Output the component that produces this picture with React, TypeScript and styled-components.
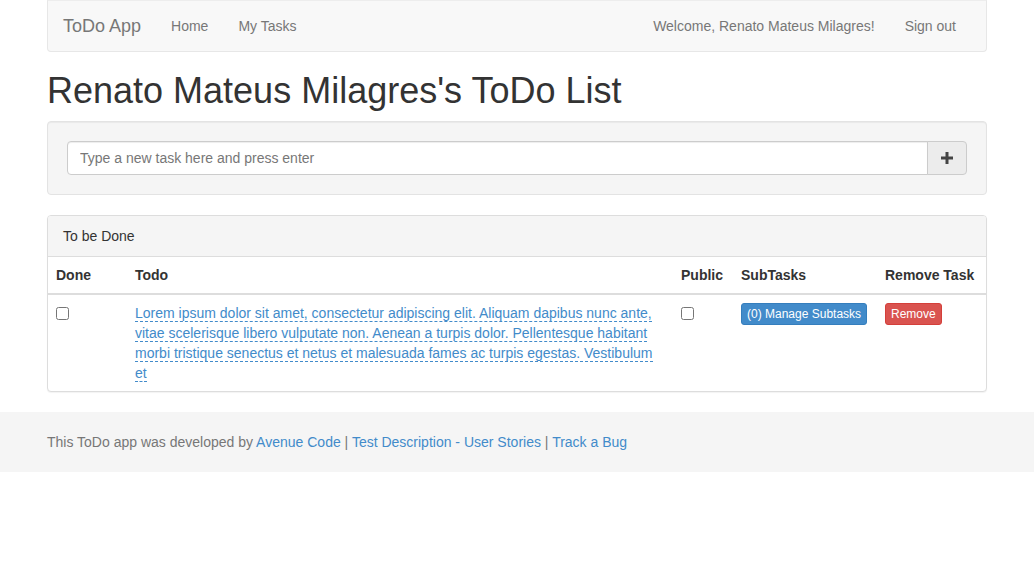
import React from "react";
import styled, { createGlobalStyle } from "styled-components";

const Global = createGlobalStyle`
  * { box-sizing: border-box; }
  html, body { margin: 0; padding: 0; }
  body {
    font-family: "Liberation Sans", Arial, Helvetica, sans-serif;
    font-size: 14px;
    line-height: 1.42857143;
    color: #333;
    background: #fff;
  }
`;

const Container = styled.div`
  width: 970px;
  margin: 0 auto;
  padding: 0 15px;
`;

const Navbar = styled.nav`
  display: flex;
  align-items: center;
  justify-content: space-between;
  height: 52px;
  padding: 0 15px;
  background: #f8f8f8;
  border: 1px solid #e7e7e7;
  border-top-color: #ededed;
  border-radius: 0 0 4px 4px;
  margin-bottom: 19px;
`;

const NavGroup = styled.div`
  display: flex;
  align-items: center;
`;

const Brand = styled.a`
  font-size: 18px;
  line-height: 20px;
  color: #777;
  padding: 15px 15px 15px 0;
  text-decoration: none;
`;

const NavLink = styled.a`
  font-size: 14px;
  line-height: 20px;
  color: #777;
  padding: 15px;
  text-decoration: none;
`;

const NavText = styled.span`
  color: #777;
  margin: 0 15px;
  line-height: 20px;
`;

const Title = styled.h1`
  font-family: "Liberation Sans", Arial, sans-serif;
  font-weight: 500;
  font-size: 36px;
  line-height: 1.1;
  margin: 19px 0 10px;
  color: #333;
`;

const Well = styled.div`
  background: #f5f5f5;
  border: 1px solid #e3e3e3;
  border-radius: 4px;
  padding: 19px;
  margin-bottom: 20px;
  box-shadow: inset 0 1px 1px rgba(0, 0, 0, 0.05);
`;

const InputGroup = styled.div`
  display: flex;
  height: 34px;
`;

const TaskInput = styled.input`
  flex: 1;
  height: 34px;
  padding: 6px 12px;
  font-family: "Liberation Sans", Arial, sans-serif;
  font-size: 14px;
  color: #555;
  background: #fff;
  border: 1px solid #ccc;
  border-radius: 4px 0 0 4px;
  box-shadow: inset 0 1px 1px rgba(0, 0, 0, 0.075);
  outline: none;
  &::placeholder { color: #777; opacity: 1; }
`;

const AddButton = styled.button`
  width: 40px;
  height: 34px;
  margin-left: -1px;
  display: flex;
  align-items: center;
  justify-content: center;
  background: #ececec;
  border: 1px solid #ccc;
  border-radius: 0 4px 4px 0;
  padding: 0;
`;

const Panel = styled.div`
  border: 1px solid #ddd;
  border-radius: 4px;
  background: #fff;
  margin-bottom: 20px;
  box-shadow: 0 1px 1px rgba(0, 0, 0, 0.05);
  overflow: hidden;
`;

const PanelHeading = styled.div`
  background: #f5f5f5;
  border-bottom: 1px solid #ddd;
  padding: 10px 15px;
  line-height: 20px;
  color: #333;
`;

const Table = styled.table`
  width: 100%;
  border-collapse: collapse;
  table-layout: fixed;
`;

const Th = styled.th<{ $w: number }>`
  width: ${(p) => p.$w}px;
  text-align: left;
  font-weight: bold;
  padding: 8px;
  line-height: 20px;
  border-bottom: 2px solid #ddd;
  vertical-align: bottom;
`;

const Td = styled.td`
  padding: 8px;
  line-height: 20px;
  vertical-align: top;
`;

const Check = styled.input`
  margin: 4px 0 0;
  width: 13px;
  height: 13px;
  display: block;
`;

const EditableLink = styled.a`
  color: #428bca;
  text-decoration: none;
  border-bottom: 1px dashed #428bca;
`;

const XsButton = styled.button<{ $variant: "primary" | "danger" }>`
  font-family: "Liberation Sans", Arial, sans-serif;
  font-size: 12px;
  line-height: 1.5;
  padding: 1px 5px;
  border-radius: 3px;
  color: #fff;
  background: ${(p) => (p.$variant === "primary" ? "#428bca" : "#d9534f")};
  border: 1px solid ${(p) => (p.$variant === "primary" ? "#357ebd" : "#d43f3a")};
`;

const Footer = styled.footer`
  background: #f5f5f5;
  padding: 20px 0;
  line-height: 20px;
  color: #777;
`;

const FootLink = styled.a`
  color: #428bca;
  text-decoration: none;
`;

const PlusIcon = () => (
  <svg width="14" height="14" viewBox="0 0 14 14">
    <path d="M5.5 1h3v4.5H13v3H8.5V13h-3V8.5H1v-3h4.5z" fill="#444" />
  </svg>
);

export default function App() {
  return (
    <>
      <Global />
      <Container>
        <Navbar>
          <NavGroup>
            <Brand href="#">ToDo App</Brand>
            <NavLink href="#">Home</NavLink>
            <NavLink href="#">My Tasks</NavLink>
          </NavGroup>
          <NavGroup>
            <NavText>Welcome, Renato Mateus Milagres!</NavText>
            <NavLink href="#">Sign out</NavLink>
          </NavGroup>
        </Navbar>
        <Title>Renato Mateus Milagres's ToDo List</Title>
        <Well>
          <InputGroup>
            <TaskInput placeholder="Type a new task here and press enter" />
            <AddButton>
              <PlusIcon />
            </AddButton>
          </InputGroup>
        </Well>
        <Panel>
          <PanelHeading>To be Done</PanelHeading>
          <Table>
            <thead>
              <tr>
                <Th $w={79}>Done</Th>
                <Th $w={546}>Todo</Th>
                <Th $w={60}>Public</Th>
                <Th $w={144}>SubTasks</Th>
                <Th $w={109}>Remove Task</Th>
              </tr>
            </thead>
            <tbody>
              <tr>
                <Td>
                  <Check type="checkbox" />
                </Td>
                <Td>
                  <EditableLink href="#">
                    Lorem ipsum dolor sit amet, consectetur adipiscing elit. Aliquam dapibus nunc ante,
                    vitae scelerisque libero vulputate non. Aenean a turpis dolor. Pellentesque habitant
                    morbi tristique senectus et netus et malesuada fames ac turpis egestas. Vestibulum et
                  </EditableLink>
                </Td>
                <Td>
                  <Check type="checkbox" />
                </Td>
                <Td>
                  <XsButton $variant="primary">(0) Manage Subtasks</XsButton>
                </Td>
                <Td>
                  <XsButton $variant="danger">Remove</XsButton>
                </Td>
              </tr>
            </tbody>
          </Table>
        </Panel>
      </Container>
      <Footer>
        <Container>
          This ToDo app was developed by <FootLink href="#">Avenue Code</FootLink> |{" "}
          <FootLink href="#">Test Description</FootLink>{" "}
          <FootLink href="#">-</FootLink>{" "}
          <FootLink href="#">User Stories</FootLink> | <FootLink href="#">Track a Bug</FootLink>
        </Container>
      </Footer>
    </>
  );
}
